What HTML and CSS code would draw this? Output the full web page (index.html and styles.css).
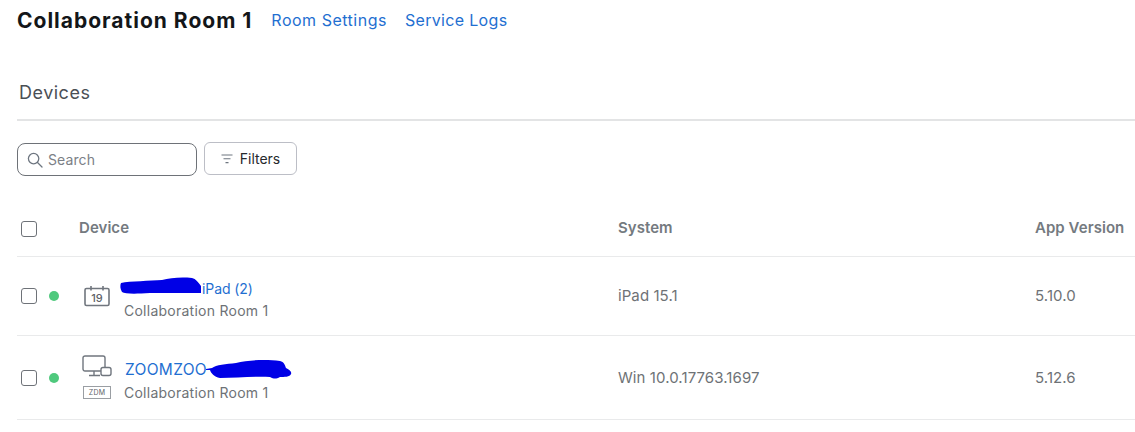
FILE: index.html
```html
<!DOCTYPE html>
<html lang="en">
<head>
<meta charset="utf-8">
<title>Collaboration Room 1</title>
<link rel="stylesheet" href="styles.css">
</head>
<body>
<header class="top">
  <h1 class="title">Collaboration Room 1</h1>
  <a class="top-link" href="#">Room Settings</a>
  <a class="top-link logs" href="#">Service Logs</a>
</header>
<h2 class="section">Devices</h2>
<div class="toolbar">
  <label class="search">
    <svg class="search-icon" width="16" height="16" viewBox="0 0 16 16" fill="none" stroke="#6e7680" stroke-width="1.3"><circle cx="6.6" cy="6.6" r="5.2"/><path d="M10.5 10.5L15 15" stroke-linecap="round"/></svg>
    <span class="placeholder">Search</span>
  </label>
  <button class="filters" type="button">
    <svg width="12" height="10" viewBox="0 0 12 10" fill="none" stroke="#6e7680" stroke-width="1.1"><path d="M0.5 1h11M2.5 4.8h7M4.5 8.6h3"/></svg>
    <span>Filters</span>
  </button>
</div>
<div class="table">
  <div class="row head">
    <div class="c-check"><span class="box"></span></div>
    <div class="c-device">Device</div>
    <div class="c-system">System</div>
    <div class="c-app">App Version</div>
  </div>
  <div class="row first">
    <div class="c-check"><span class="box"></span><span class="dot"></span></div>
    <div class="c-device device-cell">
      <div class="icons icons-one">
        <svg width="26" height="22" viewBox="0 0 26 22" fill="none" stroke="#70767e" stroke-width="1.6"><rect x="1" y="3.5" width="24" height="17" rx="1.5"/><path d="M7 1v4.5M19 1v4.5"/><text x="13" y="17" class="cal-num">19</text></svg>
      </div>
      <div class="names">
        <div class="name name-a"><svg class="scribble-a" width="82" height="18" viewBox="0 0 82 18"><path d="M1 6C10 4 30 4 42 3 50 1 60 0 72 1 76 2 78 5 81 9L81 16 30 16C15 17 5 17 2 15 0 12 0 8 1 6Z" fill="#0000e6"/></svg><a class="link link-ipad" href="#">iPad (2)</a></div>
        <div class="sub">Collaboration Room 1</div>
      </div>
    </div>
    <div class="c-system">iPad 15.1</div>
    <div class="c-app">5.10.0</div>
  </div>
  <div class="row second">
    <div class="c-check"><span class="box"></span><span class="dot"></span></div>
    <div class="c-device device-cell">
      <div class="icons icons-two">
        <svg width="30" height="23" viewBox="0 0 30 23" fill="none" stroke="#70767e" stroke-width="1.4"><path d="M19 16H3a2 2 0 0 1-2-2V3a2 2 0 0 1 2-2h18a2 2 0 0 1 2 2v9"/><path d="M12 16v4M7 20.5h11"/><rect x="19" y="12.5" width="10" height="8" rx="2"/></svg>
        <span class="zdm">ZDM</span>
      </div>
      <div class="names">
        <div class="name name-b"><a class="link link-zoom" href="#">ZOOMZOO</a><svg class="scribble-b" width="86" height="21" viewBox="0 0 86 21"><path d="M0 10L6 9C10 6 20 5 30 4 42 1 60 0 74 2 78 3 79 6 80 9 84 11 86 13 85 15 84 18 78 18 74 18 70 20 68 20 64 18 50 17 30 19 14 19 8 18 5 14 4 11L0 11Z" fill="#0000e6"/></svg></div>
        <div class="sub">Collaboration Room 1</div>
      </div>
    </div>
    <div class="c-system">Win 10.0.17763.1697</div>
    <div class="c-app">5.12.6</div>
  </div>
</div>
</body>
</html>
```
FILE: styles.css
```css
* { box-sizing: border-box; }
html, body { margin: 0; padding: 0; background: #fff; }
body { font-family: Inter, "Liberation Sans", sans-serif; width: 1135px; height: 432px; overflow: hidden; color: #6e7276; }
.top { display: flex; align-items: center; height: 41px; padding-left: 17px; }
.title { margin: 0 19px 0 0; font-size: 21px; line-height: 41px; font-weight: 700; letter-spacing: 1px; color: #131619; }
.top-link { margin: 0 18px 2px 0; font-size: 16px; color: #1f6fd1; text-decoration: none; letter-spacing: 0.5px; }
.logs { letter-spacing: 0.33px; }
.section { margin: 0 0 0 17px; height: 80px; padding: 40px 0 0 2px; font-size: 18px; line-height: 24px; font-weight: 400; color: #4a4f55; border-bottom: 2px solid #e3e4e5; letter-spacing: 0.5px; }
.toolbar { display: flex; align-items: flex-start; gap: 7px; padding: 20px 0 0 17px; height: 82px; }
.search { display: flex; align-items: center; width: 180px; height: 33px; padding-left: 9px; border: 1px solid #6e7278; border-radius: 8px; margin-top: 2px; }
.search-icon { flex: none; }
.placeholder { margin-left: 5px; font-size: 14px; letter-spacing: 0.1px; color: #7b8086; }
.filters { display: flex; align-items: center; justify-content: center; gap: 7px; width: 93px; height: 33px; background: #fff; border: 1px solid #bcbec6; border-radius: 6px; font: 400 14px Inter, "Liberation Sans", sans-serif; color: #26292d; padding: 0; margin-top: 1px; }
.table { margin-left: 17px; }
.row { display: grid; grid-template-columns: 62px 539px 417px 1fr; align-items: center; border-bottom: 1px solid #e9eaeb; font-size: 15px; letter-spacing: 0.08px; color: #6e7276; }
.head { height: 54px; padding-bottom: 4px; font-weight: 600; font-size: 15px; letter-spacing: 0.05px; color: #747a80; }
.head .c-check { padding-top: 2px; }
.first { height: 79px; }
.first .c-system, .first .c-app { padding-bottom: 2px; }
.second { height: 84px; }
.c-check { display: flex; align-items: center; padding-left: 4px; gap: 12px; }
.box { flex: none; width: 16px; height: 16px; border: 1px solid #6e7278; border-radius: 3px; background: #fff; }
.dot { flex: none; width: 10px; height: 10px; border-radius: 50%; background: #4fc97d; }
.device-cell { display: flex; align-items: center; }
.icons { display: flex; flex-direction: column; align-items: flex-start; width: 46px; flex: none; padding-left: 3px; }
.icons-one { padding-left: 5px; }
.icons-two { gap: 8px; padding-bottom: 2px; }
.cal-num { font: 500 11px Inter, "Liberation Sans", sans-serif; fill: #5d6268; stroke: none; text-anchor: middle; }
.zdm { display: flex; align-items: center; justify-content: center; width: 28px; height: 13px; margin-left: 1px; border: 1px solid #9a9ea3; font-size: 7px; letter-spacing: 0.2px; color: #5d6268; }
.names { display: flex; flex-direction: column; padding-top: 4px; }
.name { display: flex; align-items: center; height: 26px; }
.link { color: #1f6fd1; text-decoration: none; }
.link-ipad { font-size: 14px; letter-spacing: -0.1px; }
.link-zoom { font-size: 15.5px; letter-spacing: 0.3px; }
.sub { font-size: 14px; line-height: 20px; color: #6e7276; letter-spacing: 0.25px; margin-left: -1px; }
.scribble-a { flex: none; margin: 0 0 5px -5px; }
.scribble-b { flex: none; margin: 0 0 1px -1px; }
```
